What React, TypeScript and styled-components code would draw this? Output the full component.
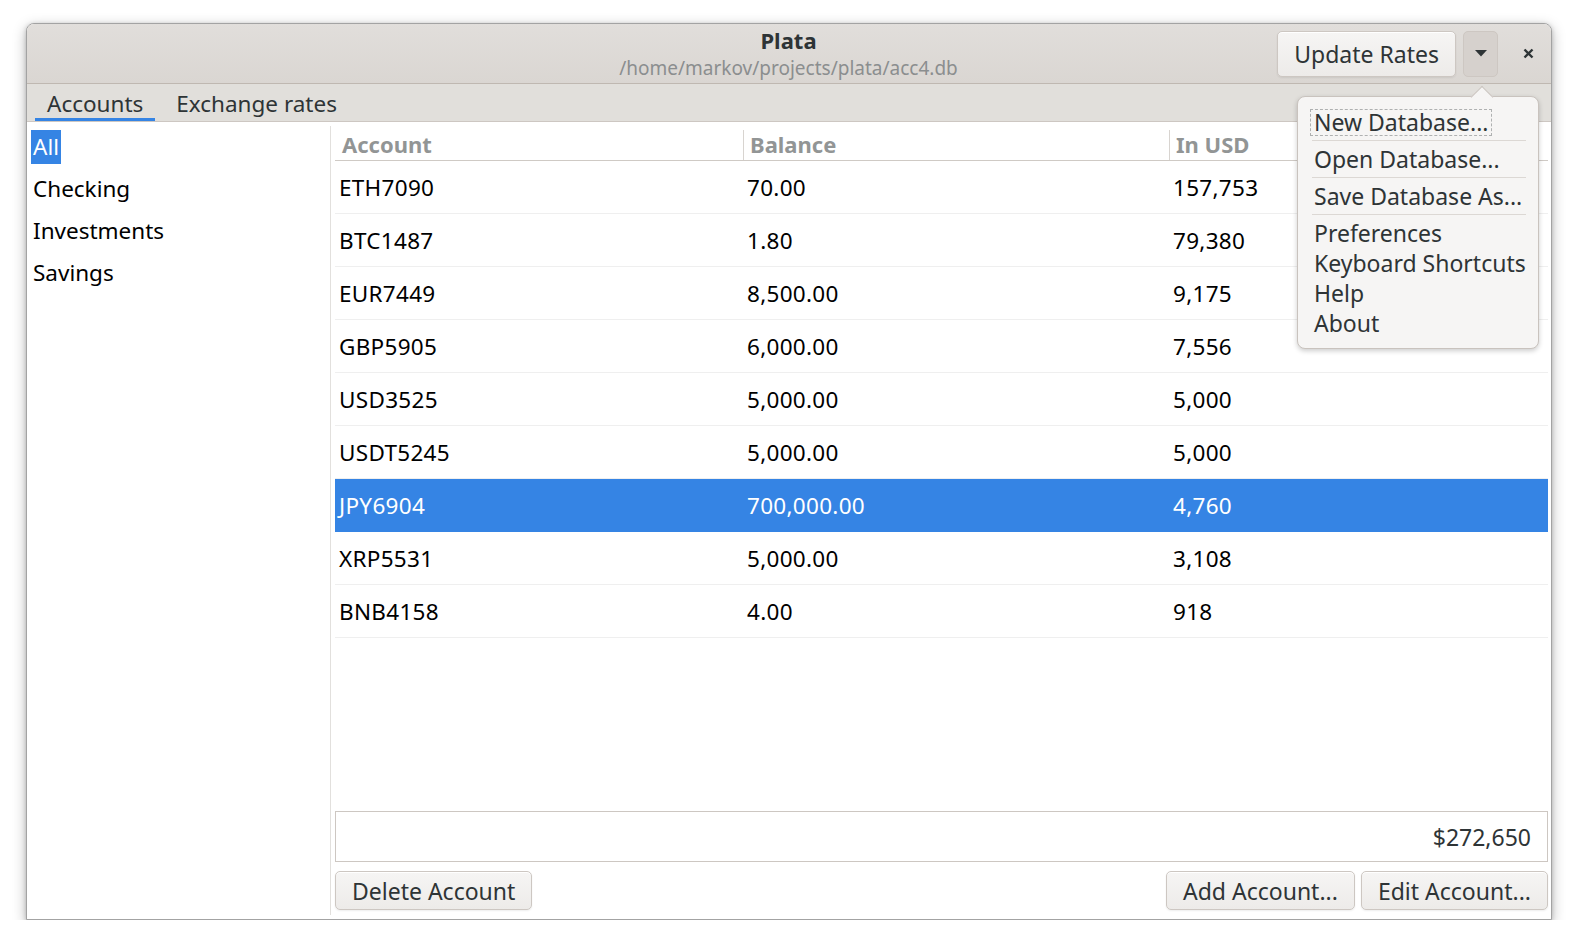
import styled, { createGlobalStyle } from "styled-components"

const GlobalStyle = createGlobalStyle`
    body {
        margin: 0;
        background: #ffffff;
        font-family: "Noto Sans", "DejaVu Sans", sans-serif;
    }
`

type Row = { account: string; balance: string; usd: string }

const rows: Row[] = [
    { account: "ETH7090", balance: "70.00", usd: "157,753" },
    { account: "BTC1487", balance: "1.80", usd: "79,380" },
    { account: "EUR7449", balance: "8,500.00", usd: "9,175" },
    { account: "GBP5905", balance: "6,000.00", usd: "7,556" },
    { account: "USD3525", balance: "5,000.00", usd: "5,000" },
    { account: "USDT5245", balance: "5,000.00", usd: "5,000" },
    { account: "JPY6904", balance: "700,000.00", usd: "4,760" },
    { account: "XRP5531", balance: "5,000.00", usd: "3,108" },
    { account: "BNB4158", balance: "4.00", usd: "918" },
]

const selectedRow = "JPY6904"

const groups = ["All", "Checking", "Investments", "Savings"]

const App = () => {
    return (
        <Page>
            <GlobalStyle />
            <Window>
                <HeaderBar>
                    <div />
                    <TitleBlock>
                        <Title>Plata</Title>
                        <Subtitle>/home/markov/projects/plata/acc4.db</Subtitle>
                    </TitleBlock>
                    <HeaderActions>
                        <HeaderButton>Update Rates</HeaderButton>
                        <MenuButton>
                            <svg width="12" height="7" viewBox="0 0 12 7">
                                <polygon points="0,0 12,0 6,6.5" fill="#2e3436" />
                            </svg>
                        </MenuButton>
                        <CloseButton>
                            <svg width="11" height="11" viewBox="0 0 11 11">
                                <path d="M1.5 1.5 L9.5 9.5 M9.5 1.5 L1.5 9.5" stroke="#2e3436" strokeWidth="2.4" />
                            </svg>
                        </CloseButton>
                    </HeaderActions>
                </HeaderBar>

                <TabBar>
                    <Tab $active>Accounts</Tab>
                    <Tab>Exchange rates</Tab>
                </TabBar>

                <Body>
                    <Sidebar>
                        {groups.map((g, i) => (
                            <SidebarItem key={g}>
                                <SidebarLabel $selected={i === 0}>{g}</SidebarLabel>
                            </SidebarItem>
                        ))}
                    </Sidebar>
                    <Divider />
                    <Main>
                        <Table>
                            <HeaderRow>
                                <HeaderCell>Account</HeaderCell>
                                <HeaderCell $sep>Balance</HeaderCell>
                                <HeaderCell $sep>In USD</HeaderCell>
                            </HeaderRow>
                            {rows.map((r) => (
                                <DataRow key={r.account} $selected={r.account === selectedRow}>
                                    <Cell>{r.account}</Cell>
                                    <Cell>{r.balance}</Cell>
                                    <Cell>{r.usd}</Cell>
                                </DataRow>
                            ))}
                        </Table>
                        <TotalBox>$272,650</TotalBox>
                        <ButtonRow>
                            <Button>Delete Account</Button>
                            <Spacer />
                            <Button>Add Account...</Button>
                            <Button>Edit Account...</Button>
                        </ButtonRow>
                    </Main>
                </Body>

                <Popover>
                    <PopoverArrow />
                    <MenuItem><MenuLabel $focused>New Database...</MenuLabel></MenuItem>
                    <MenuSeparator />
                    <MenuItem><MenuLabel>Open Database...</MenuLabel></MenuItem>
                    <MenuSeparator />
                    <MenuItem><MenuLabel>Save Database As...</MenuLabel></MenuItem>
                    <MenuSeparator />
                    <MenuItem><MenuLabel>Preferences</MenuLabel></MenuItem>
                    <MenuItem><MenuLabel>Keyboard Shortcuts</MenuLabel></MenuItem>
                    <MenuItem><MenuLabel>Help</MenuLabel></MenuItem>
                    <MenuItem><MenuLabel>About</MenuLabel></MenuItem>
                </Popover>
            </Window>
        </Page>
    )
}
export default App

const Page = styled.div`
    padding: 23px 0 0 26px;
`
const Window = styled.div`
    position: relative;
    box-sizing: border-box;
    width: 1526px;
    height: 897px;
    display: flex;
    flex-direction: column;
    background: #ffffff;
    border: 1px solid #a3a3a3;
    border-radius: 8px 8px 0 0;
    box-shadow: 0 4px 14px rgba(0, 0, 0, 0.28), 0 1px 4px rgba(0, 0, 0, 0.18);
    color: #2e3436;
`
const HeaderBar = styled.div`
    display: grid;
    grid-template-columns: 1fr auto 1fr;
    align-items: center;
    height: 59px;
    padding: 0 1px 0 0;
    background: linear-gradient(#e1dedb, #dad6d2);
    border-bottom: 1px solid #bfb8b1;
    border-radius: 7px 7px 0 0;
`
const TitleBlock = styled.div`
    display: flex;
    flex-direction: column;
    align-items: center;
    padding-top: 2px;
`
const Title = styled.div`
    font-size: 22px;
    font-weight: 700;
    line-height: 27px;
    color: #2e3436;
`
const Subtitle = styled.div`
    font-size: 19px;
    line-height: 28px;
    color: #8b8e8f;
`
const HeaderActions = styled.div`
    display: flex;
    justify-content: flex-end;
    align-items: center;
    gap: 7px;
`
const HeaderButton = styled.div`
    box-sizing: border-box;
    height: 46px;
    padding: 0 16px;
    display: flex;
    align-items: center;
    font-size: 23px;
    color: #2e3436;
    background: linear-gradient(#f6f5f4, #edebe9);
    border: 1px solid #cdc7c2;
    border-radius: 5px;
    box-shadow: inset 0 1px #ffffff, 0 1px 2px rgba(0, 0, 0, 0.07);
`
const MenuButton = styled.div`
    box-sizing: border-box;
    width: 35px;
    height: 46px;
    display: flex;
    align-items: center;
    justify-content: center;
    background: #d6d1cd;
    border: 1px solid #cdc7c2;
    border-radius: 5px;
`
const CloseButton = styled.div`
    width: 44px;
    height: 46px;
    margin-left: 1px;
    display: flex;
    align-items: center;
    justify-content: center;
`
const TabBar = styled.div`
    display: flex;
    gap: 9px;
    height: 37px;
    padding-left: 8px;
    background: #e1dfdb;
    border-bottom: 1px solid #cdc7c2;
`
const Tab = styled.div<{ $active?: boolean }>`
    box-sizing: border-box;
    height: 37px;
    padding: 6px 12px 0;
    font-size: 22.5px;
    line-height: 28px;
    color: #2e3436;
    border-bottom: 3px solid ${(p) => (p.$active ? "#3584e4" : "transparent")};
`
const Body = styled.div`
    flex: 1;
    display: flex;
    min-height: 0;
`
const Sidebar = styled.div`
    width: 303px;
    padding-top: 4px;
`
const SidebarItem = styled.div`
    height: 42px;
    display: flex;
    align-items: center;
    padding-left: 4px;
`
const SidebarLabel = styled.span<{ $selected?: boolean }>`
    font-size: 22.5px;
    line-height: 34px;
    padding: 0 2px;
    color: ${(p) => (p.$selected ? "#ffffff" : "#000000")};
    background: ${(p) => (p.$selected ? "#3584e4" : "transparent")};
`
const Divider = styled.div`
    width: 1px;
    margin: 4px 0 4px;
    background: #e2e0dd;
`
const Main = styled.div`
    flex: 1;
    display: flex;
    flex-direction: column;
    padding: 0 3px 9px 4px;
`
const Table = styled.div`
    flex: 1;
`
const HeaderRow = styled.div`
    display: grid;
    grid-template-columns: 408px 426px 1fr;
    height: 38px;
    border-bottom: 1px solid #cfcac5;
`
const HeaderCell = styled.div<{ $sep?: boolean }>`
    position: relative;
    padding: 7px 0 0 7px;
    font-size: 22px;
    font-weight: 700;
    line-height: 30px;
    color: #929595;

    &::before {
        content: "";
        display: ${(p) => (p.$sep ? "block" : "none")};
        position: absolute;
        left: 0;
        top: 8px;
        bottom: 0;
        width: 1px;
        background: #d8d4d0;
    }
`
const DataRow = styled.div<{ $selected?: boolean }>`
    display: grid;
    grid-template-columns: 408px 426px 1fr;
    height: 53px;
    box-sizing: border-box;
    border-bottom: 1px solid ${(p) => (p.$selected ? "#3584e4" : "#efefef")};
    background: ${(p) => (p.$selected ? "#3584e4" : "transparent")};
    color: ${(p) => (p.$selected ? "#ffffff" : "#000000")};
`
const Cell = styled.div`
    display: flex;
    align-items: center;
    padding-left: 4px;
    font-size: 22.5px;
    letter-spacing: 0.3px;
`
const TotalBox = styled.div`
    box-sizing: border-box;
    height: 51px;
    display: flex;
    align-items: center;
    justify-content: flex-end;
    padding-right: 16px;
    font-size: 23px;
    color: #2e3436;
    border: 1px solid #cdc7c2;
`
const ButtonRow = styled.div`
    display: flex;
    gap: 6px;
    margin-top: 9px;
`
const Spacer = styled.div`
    flex: 1;
`
const Button = styled.div`
    box-sizing: border-box;
    height: 39px;
    padding: 0 16px;
    display: flex;
    align-items: center;
    font-size: 23px;
    color: #2e3436;
    background: linear-gradient(#f6f5f4, #edebe9);
    border: 1px solid #cdc7c2;
    border-radius: 5px;
    box-shadow: inset 0 1px #ffffff, 0 1px 2px rgba(0, 0, 0, 0.07);
`
const Popover = styled.div`
    position: absolute;
    left: 1270px;
    top: 72px;
    width: 242px;
    box-sizing: border-box;
    padding: 10px 13px 10px 16px;
    background: #f6f5f4;
    border: 1px solid #c9c3be;
    border-radius: 8px;
    box-shadow: 0 2px 5px rgba(0, 0, 0, 0.2);
`
const PopoverArrow = styled.div`
    position: absolute;
    left: 176px;
    top: -8.5px;
    width: 15px;
    height: 15px;
    background: #f6f5f4;
    border-left: 1px solid #c9c3be;
    border-top: 1px solid #c9c3be;
    transform: rotate(45deg);
`
const MenuItem = styled.div`
    position: relative;
    height: 30px;
    display: flex;
    align-items: center;
`
const MenuLabel = styled.span<{ $focused?: boolean }>`
    font-size: 23px;
    line-height: 25px;
    color: #2e3436;
    white-space: nowrap;
    margin-left: ${(p) => (p.$focused ? "-4px" : "0")};
    padding: 0 ${(p) => (p.$focused ? "3px" : "0")};
    border: ${(p) => (p.$focused ? "1px dashed rgba(46, 52, 54, 0.35)" : "none")};
`
const MenuSeparator = styled.div`
    height: 1px;
    margin: 3px -1px 3px -2px;
    background: #dcd8d4;
`
